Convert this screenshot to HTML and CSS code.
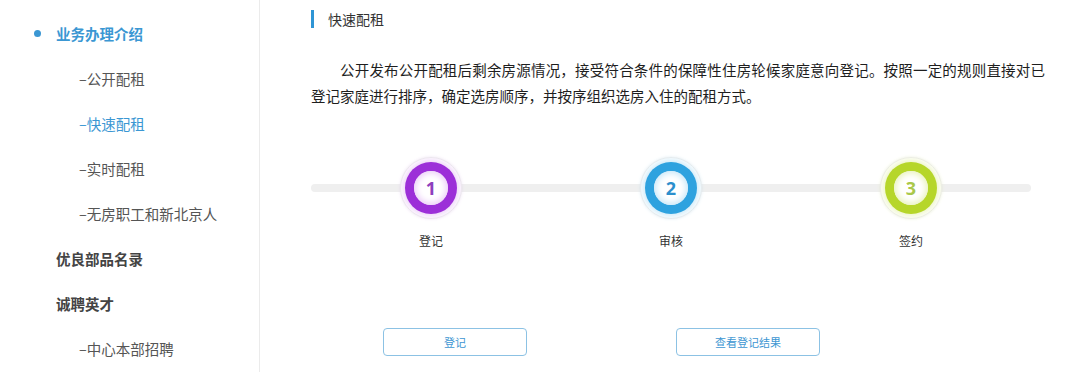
FILE: index.html
```html
<!DOCTYPE html>
<html lang="zh">
<head>
<meta charset="utf-8">
<link rel="stylesheet" href="styles.css">
</head>
<body>
<div class="page">
  <aside class="side">
    <ul class="menu">
      <li class="item head active"><span class="dot"></span>业务办理介绍</li>
      <li class="item sub">–公开配租</li>
      <li class="item sub current">–快速配租</li>
      <li class="item sub">–实时配租</li>
      <li class="item sub">–无房职工和新北京人</li>
      <li class="item head">优良部品名录</li>
      <li class="item head">诚聘英才</li>
      <li class="item sub">–中心本部招聘</li>
    </ul>
  </aside>
  <main class="main">
    <h2 class="title">快速配租</h2>
    <p class="desc">公开发布公开配租后剩余房源情况，接受符合条件的保障性住房轮候家庭意向登记。按照一定的规则直接对已登记家庭进行排序，确定选房顺序，并按序组织选房入住的配租方式。</p>
    <div class="steps">
      <div class="step purple">
        <div class="halo"><div class="ring"><div class="core">1</div></div></div>
        <div class="label">登记</div>
      </div>
      <div class="step blue">
        <div class="halo"><div class="ring"><div class="core">2</div></div></div>
        <div class="label">审核</div>
      </div>
      <div class="step green">
        <div class="halo"><div class="ring"><div class="core">3</div></div></div>
        <div class="label">签约</div>
      </div>
    </div>
    <div class="actions">
      <button class="btn">登记</button>
      <button class="btn">查看登记结果</button>
    </div>
  </main>
</div>
</body>
</html>
```
FILE: styles.css
```css
* { box-sizing: border-box; }
html, body {
  margin: 0;
  padding: 0;
  background: #fff;
  font-family: "Noto Sans CJK SC", "Noto Sans", sans-serif;
  color: #222;
}
.page {
  display: flex;
  width: 1080px;
  height: 372px;
  overflow: hidden;
}
.side {
  width: 260px;
  flex: none;
  border-right: 1px solid #ebebeb;
  height: 372px;
}
.menu {
  list-style: none;
  margin: 0;
  padding: 11px 0 0 0;
}
.item {
  height: 45px;
  line-height: 45px;
  font-size: 14.5px;
  white-space: nowrap;
}
.item.head {
  padding-left: 56px;
  font-weight: bold;
  color: #444;
  position: relative;
}
.item.head.active { color: #3b97d3; }
.dot {
  position: absolute;
  left: 34px;
  top: 19px;
  width: 7px;
  height: 7px;
  border-radius: 50%;
  background: #3b97d3;
}
.item.sub {
  padding-left: 79px;
  color: #555;
}
.item.sub.current { color: #3b97d3; }

.main {
  margin-left: 51px;
  width: 734px;
  flex: none;
}
.title {
  margin: 10px 0 0 0;
  font-size: 14px;
  font-weight: normal;
  line-height: 18px;
  color: #333;
  padding-left: 14px;
  border-left: 3px solid #2f95d5;
}
.desc {
  margin: 29px 0 0 0;
  font-size: 14.5px;
  line-height: 26px;
  text-indent: 2em;
  text-align: justify;
  color: #1e1e1e;
}
.steps {
  position: relative;
  display: grid;
  grid-template-columns: repeat(3, 240px);
  margin-top: 48px;
  width: 720px;
}
.steps::before {
  content: "";
  position: absolute;
  left: 0;
  top: 27px;
  width: 720px;
  height: 8px;
  border-radius: 4px;
  background: #efefef;
}
.step {
  display: flex;
  flex-direction: column;
  align-items: center;
  position: relative;
}
.halo {
  width: 62px;
  height: 62px;
  border-radius: 50%;
  background: #fff;
  border: 1px solid #ededed;
  box-shadow: 0 0 3px rgba(0,0,0,0.05);
  display: flex;
  align-items: center;
  justify-content: center;
}
.ring {
  width: 52px;
  height: 52px;
  border-radius: 50%;
  display: flex;
  align-items: center;
  justify-content: center;
}
.core {
  width: 34px;
  height: 34px;
  border-radius: 50%;
  background: #fff;
  display: flex;
  align-items: center;
  justify-content: center;
  font-family: "Open Sans", "DejaVu Sans", sans-serif;
  font-weight: bold;
  font-size: 18px;
}
.purple .ring { background: #9c2fd8; box-shadow: 0 0 6px 2px #ecd0f8; }
.purple .core { color: #8e3ebd; box-shadow: inset 0 0 6px 2px #ebcdf8; }
.blue .ring { background: #2ea2df; box-shadow: 0 0 6px 2px #c9e8f8; }
.blue .core { color: #2b8fcd; box-shadow: inset 0 0 6px 2px #c8e7f8; }
.green .ring { background: #b6d62a; box-shadow: 0 0 6px 2px #ebf4c0; }
.green .core { color: #a9c84a; box-shadow: inset 0 0 6px 2px #e8f2bb; }
.label {
  margin-top: 13px;
  font-size: 12px;
  line-height: 18px;
  color: #333;
}
.actions {
  display: flex;
  margin-top: 78px;
  padding-left: 72px;
  gap: 149px;
}
.btn {
  width: 144px;
  height: 28px;
  border: 1px solid #8cc2e4;
  border-radius: 4px;
  background: #fff;
  color: #3d96d2;
  font-family: "Noto Sans CJK SC", "Noto Sans", sans-serif;
  font-size: 11px;
  padding: 0;
}
```
